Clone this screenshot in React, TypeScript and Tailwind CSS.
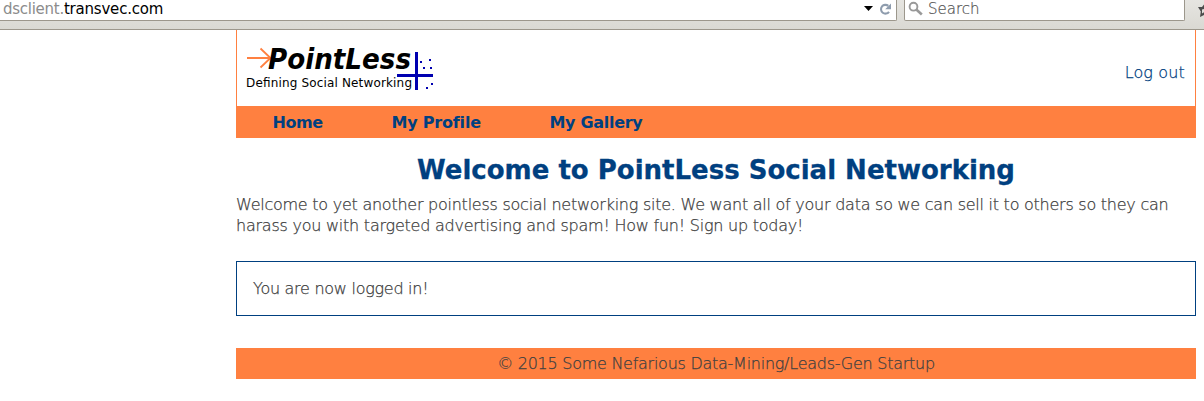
const navItems = [
  { label: "Home", className: "w-[119px] tracking-[-0.4px]" },
  { label: "My Profile", className: "w-[158px] tracking-[-0.2px]" },
  { label: "My Gallery", className: "w-[158px] tracking-[-0.3px]" },
];

function BrowserBar() {
  return (
    <div className="flex h-[30px] items-start border-b border-[#9c978c] bg-gradient-to-b from-[#e6e5e1] to-[#dad9d3] text-[15px] leading-[19px]">
      <div className="flex h-[21px] w-[897px] shrink-0 items-start rounded-br-[2px] border-r border-b border-[#9c978c] bg-white">
        <div className="grow pl-[3px] tracking-[-0.27px] whitespace-nowrap text-black">
          <span className="text-[#8c8c8c]">dsclient.</span>
          <span className="tracking-[-0.2px]">transvec.com</span>
        </div>
        <svg className="h-[20px] w-[36px] shrink-0" viewBox="0 0 36 20">
          <path d="M4 6h9l-4.500 5z" fill="#000" />
          <path d="M28.300 5.900A4.400 4.400 0 1 0 29 11.800" fill="none" stroke="#8e9cad" strokeWidth="2.1" />
          <path d="M31 3.500v5.800h-5.800z" fill="#8e9cad" />
        </svg>
      </div>
      <div className="ml-[7px] flex h-[21px] w-[281px] shrink-0 items-start rounded-b-[2px] border-x border-b border-[#9c978c] bg-white">
        <svg className="h-[20px] w-[23px] shrink-0" viewBox="0 0 23 20">
          <circle cx="8.500" cy="6.700" r="3.900" fill="none" stroke="#999" strokeWidth="1.9" />
          <path d="M11.300 9.500 16.800 14.500" stroke="#999" strokeWidth="2.6" />
        </svg>
        <span className="font-extralight text-[#555] [-webkit-text-stroke:0.2px]">Search</span>
      </div>
      <svg className="ml-[13px] h-[20px] w-[6px] shrink-0" viewBox="0 0 6 20">
        <path d="M0 7h4L6 4.500V9L4 9.500v4l2-1.200V15l-4 2 .8-5.500z" fill="#4c4c4c" />
      </svg>
    </div>
  );
}

function Logo() {
  return (
    <svg className="block h-[76px] w-[210px]" viewBox="237 30 210 76">
      <path d="M247 58h23M260.500 48.500l10 9.500L260.500 67.500" fill="none" stroke="#ff8040" strokeWidth="1.8" />
      <text
        x="268"
        y="69"
        textLength="143"
        lengthAdjust="spacingAndGlyphs"
        className="font-['DejaVu_Sans_Condensed','DejaVu_Sans',sans-serif] text-[28px] font-bold italic"
      >
        PointLess
      </text>
      <text x="246" y="87" textLength="166" className="text-[12px]">
        Defining Social Networking
      </text>
      <g fill="#0000b0" shapeRendering="crispEdges">
        <path d="M415 52h3v38h-3zM397 74h36v3h-36z" />
        <path d="M420 61h2v2h-2zM429 59h2v2h-2zM423 67h2v2h-2zM430 67h2v2h-2zM431 83h2v2h-2zM426 87h2v2h-2z" />
      </g>
    </svg>
  );
}

export default function App() {
  return (
    <div className="h-[401px] w-[1204px] overflow-hidden bg-white font-['DejaVu_Sans',sans-serif] text-[16px] text-[#404040]">
      <BrowserBar />
      <div className="ml-[236px] w-[960px]">
        <header className="flex h-[76px] justify-between border-x border-[#ff8040] text-black">
          <Logo />
          <a className="mt-[32px] mr-[10px] leading-[21px] font-extralight tracking-[0.15px] text-[#004080] [-webkit-text-stroke:0.25px]">
            Log out
          </a>
        </header>
        <nav className="flex h-[32px] bg-[#ff8040] pl-[36.500px] leading-[33px] font-bold text-[#004080]">
          {navItems.map((item) => (
            <a key={item.label} className={item.className}>
              {item.label}
            </a>
          ))}
        </nav>
        <h1 className="mt-[17px] h-[31px] text-center text-[26px] leading-[31px] font-bold text-[#004080] [-webkit-text-stroke:0.3px]">
          Welcome to PointLess Social Networking
        </h1>
        <p className="mt-[8px] leading-[21px] font-extralight tracking-[-0.247px] whitespace-nowrap [-webkit-text-stroke:0.25px]">
          Welcome to yet another pointless social networking site. We want all of your data so we can sell it to others so they can
          <br />
          <span className="tracking-[-0.235px]">harass you with targeted advertising and spam! How fun! Sign up today!</span>
        </p>
        <div className="mt-[25px] h-[55px] border border-[#004080] pl-[16px] leading-[53px] font-extralight tracking-[-0.27px] [-webkit-text-stroke:0.25px]">
          You are now logged in!
        </div>
        <footer className="mt-[32px] h-[31px] bg-[#ff8040] text-center leading-[31px] font-extralight tracking-[-0.26px] [-webkit-text-stroke:0.25px]">
          © 2015 Some Nefarious Data-Mining/Leads-Gen Startup
        </footer>
      </div>
    </div>
  );
}
